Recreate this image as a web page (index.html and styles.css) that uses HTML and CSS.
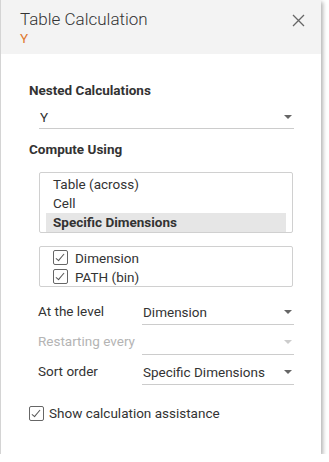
FILE: index.html
```html
<!DOCTYPE html>
<html lang="en">
<head>
    <meta charset="UTF-8">
    <title>Table Calculation</title>
    <link rel="stylesheet" href="styles.css">
</head>
<body>
    <div class="panel">
        <!-- Header -->
        <div class="header">
            <div class="titles">
                <div class="title">Table Calculation</div>
                <div class="subtitle">Y</div>
            </div>
            <svg class="close" width="13" height="13" viewBox="0 0 13 13">
                <path d="M1 1 L12 12 M12 1 L1 12" stroke="#666" stroke-width="1.3" fill="none"/>
            </svg>
        </div>

        <div class="content">
            <h3>Nested Calculations</h3>
            <div class="select nested">
                <span>Y</span>
                <span class="arrow"></span>
            </div>

            <h3>Compute Using</h3>
            <ul class="listbox">
                <li>Table (across)</li>
                <li>Cell</li>
                <li class="selected">Specific Dimensions</li>
            </ul>

            <ul class="checklist">
                <li><span class="check"></span>Dimension</li>
                <li><span class="check"></span>PATH (bin)</li>
            </ul>

            <div class="fields">
                <div class="field">
                    <label>At the level</label>
                    <div class="select"><span>Dimension</span><span class="arrow"></span></div>
                </div>
                <div class="field disabled">
                    <label>Restarting every</label>
                    <div class="select"><span></span><span class="arrow"></span></div>
                </div>
                <div class="field">
                    <label>Sort order</label>
                    <div class="select"><span>Specific Dimensions</span><span class="arrow"></span></div>
                </div>
            </div>

            <div class="assist"><span class="check"></span>Show calculation assistance</div>
        </div>
    </div>
</body>
</html>
```

FILE: styles.css
```css
body {
    margin: 0;
    background-color: #fff;
    font-family: Roboto, "Liberation Sans", sans-serif;
    color: #333;
}
.panel {
    width: 321px;
    height: 454px;
    border-left: 1px solid #d4d4d4;
    box-sizing: border-box;
    background-color: #fff;
    box-shadow: 2px 2px 4px rgba(0, 0, 0, 0.3);
}
.header {
    height: 54px;
    background-color: #f3f3f3;
    padding: 8px 16px 0 19px;
    box-sizing: border-box;
    display: flex;
    justify-content: space-between;
    align-items: flex-start;
}
.title {
    font-size: 17px;
    font-weight: 300;
    line-height: 22px;
    color: #333;
}
.subtitle {
    font-size: 13.5px;
    line-height: 16px;
    color: #e0782f;
}
.close {
    margin-top: 6px;
}
.content {
    padding: 26px 0 0 28px;
    font-size: 13.5px;
}
h3 {
    margin: 0;
    font-size: 13.5px;
    font-weight: bold;
    line-height: 20px;
    color: #333;
}
.select {
    height: 24px;
    border-bottom: 1px solid #ccc;
    display: flex;
    align-items: center;
    justify-content: space-between;
    color: #333;
    padding: 0 1px;
    box-sizing: border-box;
}
.nested {
    margin: 5px 27px 10px 10px;
}
.arrow {
    width: 0;
    height: 0;
    border-left: 4px solid transparent;
    border-right: 4px solid transparent;
    border-top: 4px solid #666;
    margin-right: 1px;
}
.listbox, .checklist {
    list-style-type: none;
    margin: 0 28px 0 10px;
    padding: 2px 6px 0 6px;
    border: 1px solid #d0d0d0;
    border-radius: 2px;
}
.listbox {
    margin-top: 13px;
    height: 61px;
    box-sizing: border-box;
}
.listbox li {
    height: 19px;
    line-height: 19px;
    padding-left: 7px;
}
.listbox li.selected {
    background-color: #e6e6e6;
    font-weight: bold;
}
.checklist {
    margin-top: 13px;
    height: 41px;
    box-sizing: border-box;
    padding: 1px 0 0 13px;
}
.checklist li {
    height: 19px;
    display: flex;
    align-items: center;
}
.check {
    width: 13px;
    height: 13px;
    border: 1px solid #666;
    border-radius: 2px;
    margin-right: 7px;
    position: relative;
    flex-shrink: 0;
}
.check::after {
    content: "";
    position: absolute;
    left: 4px;
    top: 1px;
    width: 3px;
    height: 8px;
    border-right: 1.5px solid #555;
    border-bottom: 1.5px solid #555;
    transform: rotate(40deg);
}
.fields {
    margin: 9px 27px 0 9px;
}
.field {
    display: flex;
    align-items: center;
    height: 30px;
}
.field label {
    width: 104px;
    flex-shrink: 0;
}
.field .select {
    flex: 1;
    height: 26px;
    margin-top: 2px;
}
.field.disabled label {
    color: #b4b4b4;
}
.field.disabled .arrow {
    border-top-color: #ccc;
}
.assist {
    display: flex;
    align-items: center;
    margin-top: 19px;
}
.assist .check {
    margin-right: 5px;
}
```
